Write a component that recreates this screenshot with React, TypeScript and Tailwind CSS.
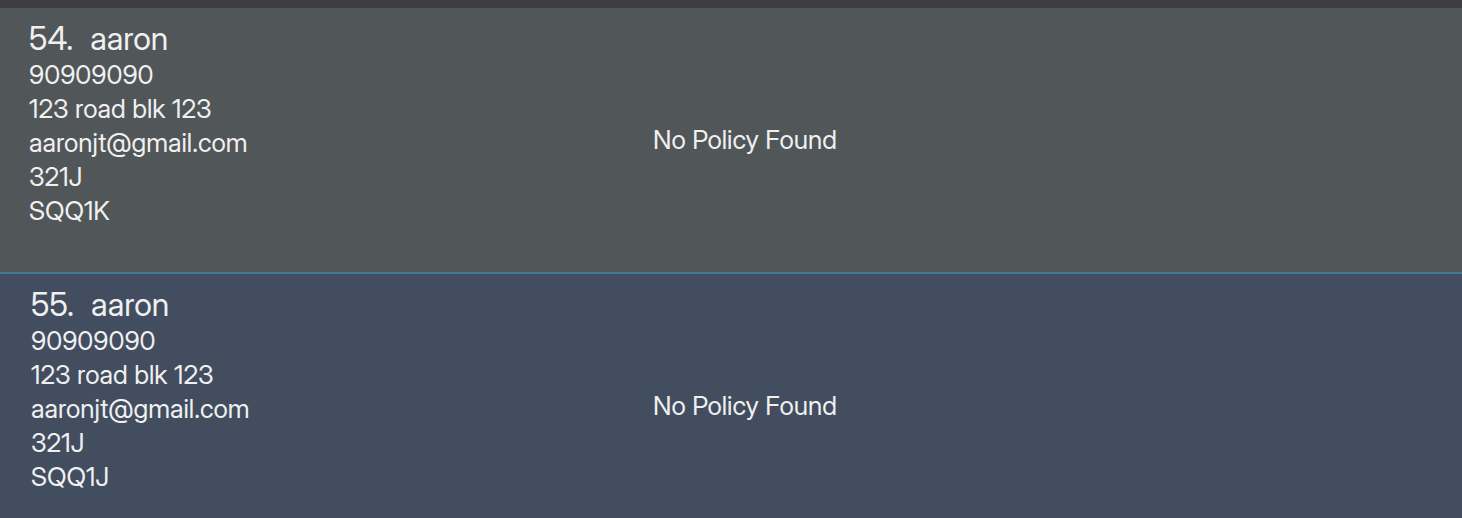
type Client = {
  index: number;
  name: string;
  phone: string;
  address: string;
  email: string;
  nric: string;
  licence: string;
};

const clients: Client[] = [
  { index: 54, name: "aaron", phone: "90909090", address: "123 road blk 123", email: "aaronjt@gmail.com", nric: "321J", licence: "SQQ1K" },
  { index: 55, name: "aaron", phone: "90909090", address: "123 road blk 123", email: "aaronjt@gmail.com", nric: "321J", licence: "SQQ1J" },
];

function ClientCard({ client, selected }: { client: Client; selected: boolean }) {
  return (
    <li
      className={
        selected
          ? "grid grid-cols-[1fr_auto_1fr] border-t-2 border-[#3e7b91] bg-[#424d5f] pt-3 pb-6 pl-[31px] pr-[3px]"
          : "grid grid-cols-[1fr_auto_1fr] bg-[#515658] pt-3 pb-11 pl-[29px] pr-px"
      }
    >
      <div className="text-[26px] leading-[34px]">
        <h2 className="flex gap-[17px] text-[32px] leading-[38px]">
          <span>{client.index}.</span>
          <span>{client.name}</span>
        </h2>
        <p>{client.phone}</p>
        <p>{client.address}</p>
        <p>{client.email}</p>
        <p>{client.nric}</p>
        <p>{client.licence}</p>
      </div>
      <p className="pt-[103px] text-[26px] leading-[34px]">No Policy Found</p>
    </li>
  );
}

export default function App() {
  return (
    <main className="min-h-screen border-t-8 border-[#3c3e3f] bg-[#424d5f] font-['Inter_Display','Inter',sans-serif] text-[#f0f0f0]">
      <ul>
        {clients.map((client) => (
          <ClientCard key={client.index} client={client} selected={client.index === 55} />
        ))}
      </ul>
    </main>
  );
}
